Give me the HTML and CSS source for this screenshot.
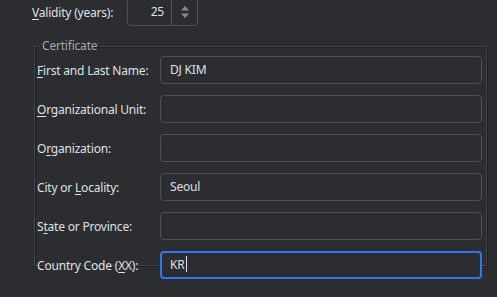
FILE: index.html
```html
<!DOCTYPE html>
<html lang="en">
<head>
<meta charset="UTF-8">
<title>Generate Key</title>
<link rel="stylesheet" href="styles.css">
</head>
<body>
<div class="validity-row">
    <span class="label"><u>V</u>alidity (years):</span>
    <div class="spinner">
        <span class="spin-value">25</span>
        <span class="spin-arrows">
            <svg width="12" height="16" viewBox="0 0 12 16">
                <path d="M6 2 L10 6.5 H2 Z" fill="#868a91"/>
                <path d="M6 14 L10 9.5 H2 Z" fill="#868a91"/>
            </svg>
        </span>
    </div>
</div>

<fieldset class="group">
    <legend>Certificate</legend>
    <div class="form-grid">
        <span class="label"><u>F</u>irst and Last Name:</span>
        <div class="field">DJ KIM</div>

        <span class="label"><u>O</u>rganizational Unit:</span>
        <div class="field"></div>

        <span class="label">O<u>r</u>ganization:</span>
        <div class="field"></div>

        <span class="label">City or <u>L</u>ocality:</span>
        <div class="field">Seoul</div>

        <span class="label">S<u>t</u>ate or Province:</span>
        <div class="field"></div>

        <span class="label">Country Code (<u>X</u>X):</span>
        <div class="field focused">KR<span class="caret"></span></div>
    </div>
</fieldset>
</body>
</html>
```

FILE: styles.css
```css
body {
    margin: 0;
    background-color: #2b2d30;
    color: #dfe1e5;
    font-family: "Noto Sans", "Liberation Sans", sans-serif;
    font-size: 12px;
    letter-spacing: -0.2px;
    width: 497px;
    height: 297px;
    overflow: hidden;
}
u {
    text-decoration-thickness: 1px;
    text-underline-offset: 2px;
}
.label {
    white-space: nowrap;
}
.validity-row {
    display: flex;
    align-items: center;
    margin-top: -2px;
    padding-left: 32px;
    height: 28px;
}
.validity-row .label {
    width: 95px;
}
.spinner {
    display: flex;
    width: 69px;
    height: 26px;
    border: 1px solid #4e5157;
    border-radius: 4px;
}
.spin-value {
    width: 36px;
    padding-right: 7px;
    text-align: right;
    line-height: 26px;
    border-right: 1px solid #4e5157;
}
.spin-arrows {
    flex: 1;
    display: flex;
    align-items: center;
    justify-content: center;
}
.group {
    margin: 12px 0 0 34px;
    width: 445px;
    height: 226px;
    padding: 0 4px 0 2px;
    border: 1px solid #45474c;
    box-shadow: 1px 1px 0 #1e1f22, inset 1px 1px 0 #1e1f22;
}
.group legend {
    margin-left: 3px;
    padding: 0 2px;
    color: #a6a9ae;
    line-height: 16px;
}
.form-grid {
    display: grid;
    grid-template-columns: 123px 1fr;
    grid-auto-rows: 28px;
    row-gap: 11px;
    align-items: center;
    margin-top: 2px;
}
.field {
    height: 26px;
    line-height: 26px;
    padding-left: 9px;
    border: 1px solid #4e5157;
    border-radius: 4px;
    background-color: #2b2d30;
}
.field.focused {
    height: 24px;
    line-height: 24px;
    padding-left: 8px;
    border: 2px solid #3574f0;
}
.caret {
    display: inline-block;
    width: 1px;
    height: 16px;
    margin-left: 1px;
    vertical-align: -3px;
    background-color: #dfe1e5;
}
```
